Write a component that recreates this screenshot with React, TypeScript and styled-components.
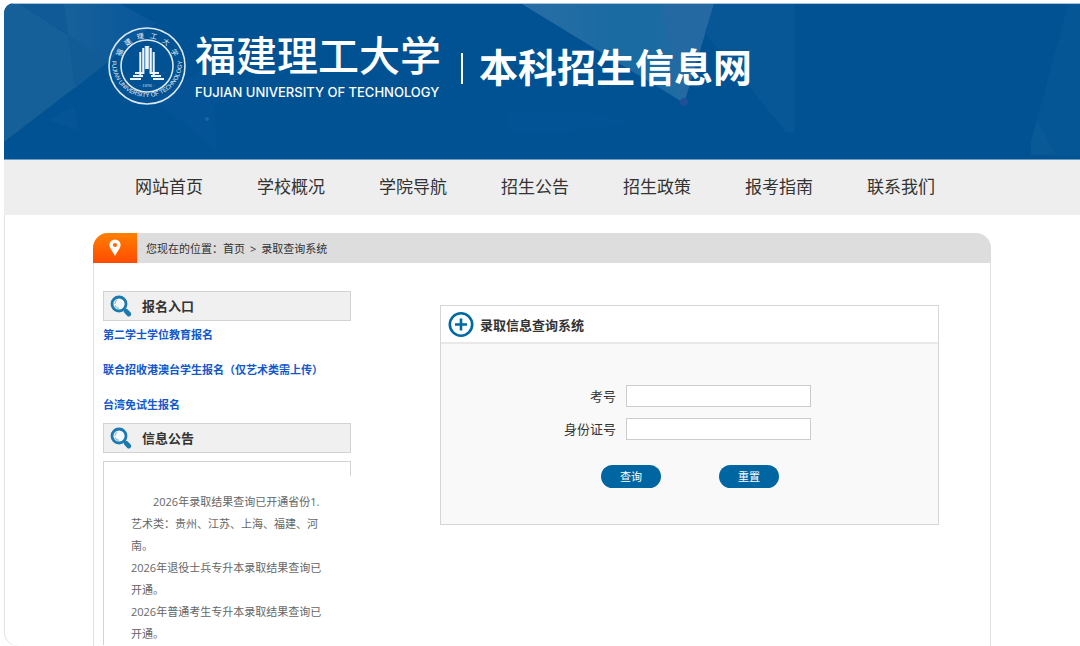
import React from "react";
import styled, { createGlobalStyle } from "styled-components";

const GlobalStyle = createGlobalStyle`
  * { box-sizing: border-box; }
  body {
    margin: 0;
    background: #fff;
    color: #333;
    font-family: "Open Sans", "Noto Sans CJK SC", sans-serif;
    font-size: 11px;
  }
  h1, h2, p, ul { margin: 0; padding: 0; }
  ul { list-style: none; }
  a { color: inherit; text-decoration: none; }
`;

const Frame = styled.div`
  margin: 3px 0 0 4px;
  min-height: calc(100vh - 3px);
  border-radius: 10px 0 0 14px;
  box-shadow: inset 1px 0 0 #e2e2e2;
  overflow: hidden;
`;

const Banner = styled.header`
  position: relative;
  height: 157px;
  background: #005293;
  border-top: 1px solid #a9c3da;
  border-bottom: 1px solid #6f9dc4;
  overflow: hidden;
`;

const Facets = styled.svg`
  position: absolute;
  top: 0;
  left: 0;
`;

const Wrap = styled.div`
  max-width: 898px;
  margin: 0 auto;
`;

const Brand = styled(Wrap)`
  position: relative;
  display: flex;
  align-items: flex-start;
  padding: 23px 0 0 15px;
  color: #fff;
`;

const Names = styled.div`
  display: flex;
  flex-direction: column;
  margin-left: 9px;
`;

const School = styled.div`
  font-size: 41px;
  line-height: 56px;
  font-weight: 500;
  white-space: nowrap;
`;

const English = styled.div`
  font-family: Inter, "Liberation Sans", sans-serif;
  font-size: 13px;
  font-weight: 500;
  line-height: 18px;
  white-space: nowrap;
`;

const Rule = styled.span`
  width: 2px;
  height: 31px;
  margin: 26px 16px 0 20px;
  background: #fff;
`;

const SiteName = styled.h1`
  padding-top: 15px;
  font-size: 39px;
  line-height: 50px;
  font-weight: 700;
  white-space: nowrap;
`;

const NavBar = styled.nav`
  padding-bottom: 2px;
  background: #eee;
`;

const NavList = styled.ul`
  display: flex;
  max-width: 898px;
  margin: 0 auto;
  padding-left: 15px;
`;

const NavItem = styled.li`
  flex: 0 0 122px;
  text-align: center;
  font-size: 17px;
  line-height: 53px;
`;

const Main = styled(Wrap)`
  margin-top: 18px;
`;

const Crumbs = styled.div`
  display: flex;
  height: 30px;
  border-radius: 15px 15px 0 0;
  background: #ddd;
  line-height: 31px;
  overflow: hidden;
`;

const Arrow = styled.span`
  padding: 0 5px;
`;

const PinBox = styled.span`
  display: flex;
  width: 44px;
  align-items: center;
  justify-content: center;
  margin-right: 9px;
  background: linear-gradient(#ff8000, #ff4b00);
`;

const Columns = styled.div`
  display: flex;
  align-items: flex-start;
  justify-content: space-between;
  min-height: calc(100vh - 263px);
  padding: 28px 51px 0 9px;
  border: solid #e2e2e2;
  border-width: 0 1px;
`;

const Side = styled.aside`
  flex: 0 0 248px;
`;

const SideTitle = styled.h2`
  display: flex;
  align-items: center;
  gap: 9px;
  height: 30px;
  padding-left: 6px;
  border: 1px solid #d3d3d3;
  background: #f0f0f0;
  font-size: 13px;
  line-height: 28px;
  font-weight: 700;
`;

const Links = styled.ul`
  padding: 4px 0 8px;
  display: flex;
  flex-direction: column;
  gap: 15px;
  color: #1257cc;
  font-weight: 700;
  line-height: 20px;
  white-space: nowrap;
`;

const NoticeTop = styled.div`
  height: 15px;
  margin-top: 8px;
  border: solid #d3d3d3;
  border-width: 1px 1px 0 1px;
`;

const Notice = styled.div`
  padding: 15px 22px 0 27px;
  border-left: 1px solid #d3d3d3;
  color: #666;
  line-height: 22px;
`;

const Lead = styled.p`
  text-indent: 22px;
`;

const Panel = styled.section`
  flex: 0 1 499px;
  margin-top: 14px;
  border: 1px solid #d6d6d6;
  background: #f9f9f9;
`;

const PanelTitle = styled.h2`
  display: flex;
  align-items: center;
  gap: 6px;
  height: 38px;
  padding-left: 7px;
  border-bottom: 2px solid #e8e8e8;
  background: #fff;
  font-size: 13px;
  font-weight: 700;
`;

const Form = styled.form`
  padding: 41px 0 36px;
`;

const Field = styled.div`
  display: flex;
  align-items: center;
  gap: 10px;
  margin-bottom: 11px;
`;

const Label = styled.label`
  width: 175px;
  text-align: right;
  font-size: 13px;
  line-height: 22px;
`;

const TextBox = styled.input`
  width: 185px;
  height: 22px;
  padding: 0 4px;
  border: 1px solid #ccc;
  background: #fff;
  font: inherit;
`;

const Actions = styled.div`
  display: flex;
  gap: 58px;
  padding: 14px 0 0 160px;
`;

const Pill = styled.button`
  width: 60px;
  height: 23px;
  padding: 0;
  border: 0;
  border-radius: 12px;
  background: #0066a1;
  color: #fff;
  font: inherit;
  line-height: 23px;
`;

const BannerFacets = () => (
  <Facets width="1200" height="156" viewBox="4 4 1200 156" aria-hidden="true">
    <defs>
      <linearGradient id="beam" x1="0" y1="0" x2="1" y2="0">
        <stop offset="0" stopColor="#2a6ea6" />
        <stop offset="0.45" stopColor="#1a6ba2" />
        <stop offset="0.7" stopColor="#1a6ba2" />
        <stop offset="1" stopColor="#2a6ea6" />
      </linearGradient>
      <linearGradient id="wing" x1="0" y1="0" x2="1" y2="0">
        <stop offset="0" stopColor="#17619b" />
        <stop offset="1" stopColor="#07569a" />
      </linearGradient>
    </defs>
    <polygon points="4,4 20,4 68,35 108,62 4,142" fill="#166099" />
    <polygon points="20,4 64,4 68,35" fill="#0f5a97" />
    <polygon points="64,4 120,4 156,23 108,62 68,35" fill="url(#wing)" />
    <polygon points="68,35 108,62 75,88" fill="#115c97" />
    <polygon points="48,120 74,106 79,131" fill="#07569a" opacity="0.5" />
    <polygon points="156,100 215,60 216,152" fill="#07569a" opacity="0.4" />
    <circle cx="207" cy="119" r="2" fill="#1a67a3" />
    <polygon points="522,4 714,4 684,103" fill="url(#beam)" />
    <polygon points="662,4 714,4 684,103 676,80" fill="#2569a2" />
    <circle cx="684" cy="102" r="4" fill="#1f5097" />
    <polygon points="714,4 795,4 795,132 786,132 705,33" fill="#075796" />
    <polygon points="507,110 570,110 640,122 570,132 507,132" fill="#07569a" opacity="0.35" />
    <polygon points="1068,4 1204,4 1204,156 1056,156 1037,120" fill="#045694" />
    <polygon points="1037,120 1056,155 1031,155 1031,140" fill="#0a5997" />
  </Facets>
);

const ringTitle = "福建理工大学".split("").join("\u00a0\u00a0\u00a0");

const Seal = () => (
  <svg width="78" height="78" viewBox="0 0 78 78" fill="none" role="img" aria-label="校徽">
    <defs>
      <path id="arcTop" d="M11 39 A28 28 0 0 1 67 39" />
      <path id="arcBottom" d="M4 35 A35 35 0 1 0 74 35" />
    </defs>
    <circle cx="39" cy="39" r="38" stroke="#dbe8f3" strokeWidth="1.6" />
    <circle cx="39" cy="39" r="26" stroke="#dbe8f3" strokeWidth="1.6" />
    <text fill="#e8f1f8" fontSize="7">
      <textPath href="#arcTop" startOffset="50%" textAnchor="middle">{ringTitle}</textPath>
    </text>
    <text fill="#e8f1f8" fontSize="6" fontFamily="Liberation Sans, sans-serif">
      <textPath href="#arcBottom" startOffset="50%" textAnchor="middle">FUJIAN UNIVERSITY OF TECHNOLOGY</textPath>
    </text>
    <g stroke="#eef5fa">
      <path d="M39 19V42" strokeWidth="4.4" />
      <path d="M35.3 21V47M42.7 21V47" strokeWidth="2.2" />
      <path d="M32.3 25V50M45.7 25V50" strokeWidth="2" />
      <path d="M27 46H36M42 46H51M25 49H35M43 49H53M22 52H33M45 52H56" strokeWidth="2" />
      <path d="M37 20V42M41 20V42" stroke="#3f7cad" strokeWidth="0.6" />
    </g>
    <text x="39" y="60" fill="#c5d9ea" fontSize="5" textAnchor="middle" fontFamily="Liberation Serif, serif">· 1896 ·</text>
  </svg>
);

const Magnifier = () => (
  <svg width="23" height="23" viewBox="0 0 23 23" fill="none" aria-hidden="true">
    <circle cx="9" cy="9" r="7" fill="#f5f9fc" stroke="#1a79b1" strokeWidth="2.8" />
    <path d="M5 10.5A4.6 4.6 0 0 0 9 13.4" stroke="#8fc0dc" strokeWidth="1.2" />
    <path d="M4.9 9A4.3 4.3 0 0 1 7 5.3" stroke="#8fc0dc" strokeWidth="1.2" />
    <path d="M14 14L16 16" stroke="#1a79b1" strokeWidth="2.4" />
    <path d="M16.2 16.4L18.8 19" stroke="#1a79b1" strokeWidth="4.8" strokeLinecap="round" />
  </svg>
);

const Pin = () => (
  <svg width="12" height="18" viewBox="0 0 12 18" aria-hidden="true">
    <path
      d="M6 0.5A5.6 5.6 0 0 0 0.4 6C0.4 9.4 4 12.6 6 17C8 12.6 11.6 9.4 11.6 6A5.6 5.6 0 0 0 6 0.5ZM6 3.9A2.1 2.1 0 1 1 6 8.1A2.1 2.1 0 0 1 6 3.9Z"
      fill="#fff"
      fillRule="evenodd"
    />
  </svg>
);

const PlusCircle = () => (
  <svg width="26" height="26" viewBox="0 0 26 26" fill="none" stroke="#0068a3" aria-hidden="true">
    <circle cx="13" cy="13.5" r="11.2" strokeWidth="2.6" />
    <path d="M13 7.5V19.5M7 13.5H19" strokeWidth="2.6" />
  </svg>
);

const navItems = ["网站首页", "学校概况", "学院导航", "招生公告", "招生政策", "报考指南", "联系我们"];
const entries = ["第二学士学位教育报名", "联合招收港澳台学生报名（仅艺术类需上传）", "台湾免试生报名"];

export default function App() {
  return (
    <>
      <GlobalStyle />
      <Frame>
        <Banner>
          <BannerFacets />
          <Brand>
            <Seal />
            <Names>
              <School>福建理工大学</School>
              <English>FUJIAN UNIVERSITY OF TECHNOLOGY</English>
            </Names>
            <Rule />
            <SiteName>本科招生信息网</SiteName>
          </Brand>
        </Banner>
        <NavBar>
          <NavList>
            {navItems.map((item) => (
              <NavItem key={item}>
                <a href="#">{item}</a>
              </NavItem>
            ))}
          </NavList>
        </NavBar>
        <Main as="main">
          <Crumbs>
            <PinBox>
              <Pin />
            </PinBox>
            <span>
              您现在的位置：<a href="#">首页</a>
              <Arrow>&gt;</Arrow>
              <a href="#">录取查询系统</a>
            </span>
          </Crumbs>
          <Columns>
            <Side>
              <SideTitle>
                <Magnifier />
                报名入口
              </SideTitle>
              <Links>
                {entries.map((entry) => (
                  <li key={entry}>
                    <a href="#">{entry}</a>
                  </li>
                ))}
              </Links>
              <SideTitle>
                <Magnifier />
                信息公告
              </SideTitle>
              <NoticeTop />
              <Notice>
                <Lead>2026年录取结果查询已开通省份1.艺术类：贵州、江苏、上海、福建、河南。</Lead>
                <p>2026年退役士兵专升本录取结果查询已开通。</p>
                <p>2026年普通考生专升本录取结果查询已开通。</p>
              </Notice>
            </Side>
            <Panel>
              <PanelTitle>
                <PlusCircle />
                录取信息查询系统
              </PanelTitle>
              <Form onSubmit={(e) => e.preventDefault()}>
                <Field>
                  <Label htmlFor="examNo">考号</Label>
                  <TextBox id="examNo" type="text" />
                </Field>
                <Field>
                  <Label htmlFor="idNo">身份证号</Label>
                  <TextBox id="idNo" type="text" />
                </Field>
                <Actions>
                  <Pill type="submit">查询</Pill>
                  <Pill type="reset">重置</Pill>
                </Actions>
              </Form>
            </Panel>
          </Columns>
        </Main>
      </Frame>
    </>
  );
}
